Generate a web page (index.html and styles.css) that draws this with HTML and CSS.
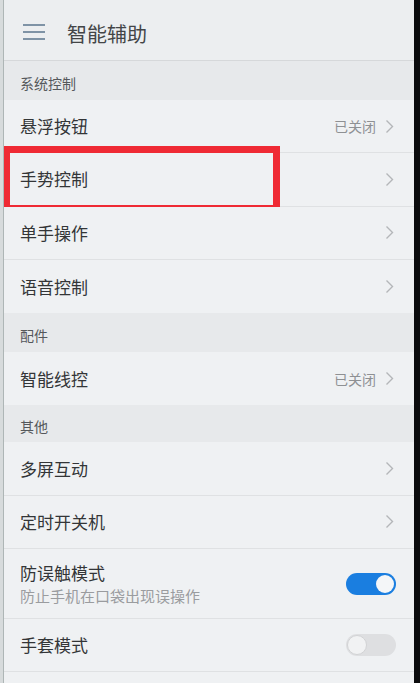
FILE: index.html
```html
<!DOCTYPE html>
<html lang="zh">
<head>
<meta charset="utf-8">
<link rel="stylesheet" href="styles.css">
</head>
<body>
<div class="frame">
  <div class="edge-left"></div>
  <div class="screen">
    <header class="topbar">
      <svg class="menu-icon" width="24" height="18" viewBox="0 0 24 18">
        <rect x="1" y="1" width="22" height="2" fill="#7f93a6"/>
        <rect x="1" y="8" width="22" height="2" fill="#7f93a6"/>
        <rect x="1" y="15" width="22" height="2" fill="#7f93a6"/>
      </svg>
      <span class="title">智能辅助</span>
    </header>

    <div class="section">系统控制</div>
    <div class="row"><span class="label">悬浮按钮</span><span class="right"><span class="status">已关闭</span><svg class="chev" width="9" height="15" viewBox="0 0 9 15"><path d="M1.5 1.5 L7.5 7.5 L1.5 13.5" fill="none" stroke="#b4b6b9" stroke-width="1.4"/></svg></span></div>
    <div class="row highlighted"><span class="label">手势控制</span><span class="right"><svg class="chev" width="9" height="15" viewBox="0 0 9 15"><path d="M1.5 1.5 L7.5 7.5 L1.5 13.5" fill="none" stroke="#b4b6b9" stroke-width="1.4"/></svg></span><div class="redbox"></div></div>
    <div class="row"><span class="label">单手操作</span><span class="right"><svg class="chev" width="9" height="15" viewBox="0 0 9 15"><path d="M1.5 1.5 L7.5 7.5 L1.5 13.5" fill="none" stroke="#b4b6b9" stroke-width="1.4"/></svg></span></div>
    <div class="row last"><span class="label">语音控制</span><span class="right"><svg class="chev" width="9" height="15" viewBox="0 0 9 15"><path d="M1.5 1.5 L7.5 7.5 L1.5 13.5" fill="none" stroke="#b4b6b9" stroke-width="1.4"/></svg></span></div>

    <div class="section">配件</div>
    <div class="row last"><span class="label">智能线控</span><span class="right"><span class="status">已关闭</span><svg class="chev" width="9" height="15" viewBox="0 0 9 15"><path d="M1.5 1.5 L7.5 7.5 L1.5 13.5" fill="none" stroke="#b4b6b9" stroke-width="1.4"/></svg></span></div>

    <div class="section short">其他</div>
    <div class="row"><span class="label">多屏互动</span><span class="right"><svg class="chev" width="9" height="15" viewBox="0 0 9 15"><path d="M1.5 1.5 L7.5 7.5 L1.5 13.5" fill="none" stroke="#b4b6b9" stroke-width="1.4"/></svg></span></div>
    <div class="row"><span class="label">定时开关机</span><span class="right"><svg class="chev" width="9" height="15" viewBox="0 0 9 15"><path d="M1.5 1.5 L7.5 7.5 L1.5 13.5" fill="none" stroke="#b4b6b9" stroke-width="1.4"/></svg></span></div>
    <div class="row tall">
      <div class="texts">
        <span class="label">防误触模式</span>
        <span class="sub">防止手机在口袋出现误操作</span>
      </div>
      <span class="toggle on"><span class="knob"></span></span>
    </div>
    <div class="row"><span class="label">手套模式</span><span class="toggle off"><span class="knob"></span></span></div>
  </div>
  <div class="edge-right"></div>
</div>
</body>
</html>
```

FILE: styles.css
```css
html, body {
  margin: 0;
  padding: 0;
  width: 420px;
  height: 683px;
  overflow: hidden;
  background: #eef0f2;
  font-family: "Noto Sans CJK SC", "Noto Sans", sans-serif;
}

.frame {
  display: flex;
  width: 420px;
  height: 683px;
}

.edge-left {
  width: 3px;
  flex: none;
  background: #d7dbdc;
  border-right: 1px solid #aeb6b6;
}

.edge-right {
  width: 6px;
  flex: none;
  background: #0c0c0e;
}

.screen {
  flex: 1;
  display: flex;
  flex-direction: column;
  background: #eff1f3;
  overflow: hidden;
}

.topbar {
  height: 61px;
  flex: none;
  box-sizing: border-box;
  display: flex;
  align-items: center;
  padding: 3px 0 0 18px;
  background: #eceef0;
  border-bottom: 1px solid #d6d8da;
}

.menu-icon {
  margin-right: 21px;
}

.title {
  font-size: 20px;
  color: #434547;
  margin-top: 3px;
}

.section {
  height: 39px;
  flex: none;
  box-sizing: border-box;
  padding: 12px 0 0 16px;
  font-size: 14px;
  line-height: 20px;
  color: #55585b;
  background: #e7e9eb;
}

.section.short {
  height: 37px;
  padding-top: 11px;
}

.row {
  position: relative;
  height: 53.3px;
  flex: none;
  box-sizing: border-box;
  display: flex;
  align-items: center;
  justify-content: space-between;
  padding: 0 20px 0 16px;
  background: #eff1f3;
  border-bottom: 1px solid #dfe1e3;
}

.row.last {
  border-bottom: none;
}

.row.tall {
  height: 70px;
}

.label {
  font-size: 17px;
  color: #333537;
  line-height: 22px;
}

.texts {
  display: flex;
  flex-direction: column;
}

.texts .label {
  line-height: 24px;
}

.sub {
  font-size: 15px;
  color: #9a9c9f;
  line-height: 21px;
}

.right {
  display: flex;
  align-items: center;
}

.status {
  font-size: 14px;
  color: #8e9093;
  margin-right: 9px;
}

.chev {
  display: block;
}

.redbox {
  position: absolute;
  left: -1px;
  top: -7px;
  width: 263px;
  height: 52px;
  border: 7px solid #ef2a34;
  pointer-events: none;
}

.toggle {
  position: relative;
  display: block;
  width: 50px;
  height: 22px;
  border-radius: 11px;
  margin-right: -2px;
}

.toggle.on {
  background: #1a7ee0;
}

.toggle.off {
  background: #dedfe1;
}

.knob {
  position: absolute;
  top: 2px;
  width: 18px;
  height: 18px;
  border-radius: 50%;
  background: #f4f6f8;
}

.toggle.on .knob {
  right: 2px;
}

.toggle.off .knob {
  left: 1px;
  top: 1px;
  width: 18px;
  height: 18px;
  border: 1px solid #d2d3d5;
  background: #f1f2f3;
}
```
